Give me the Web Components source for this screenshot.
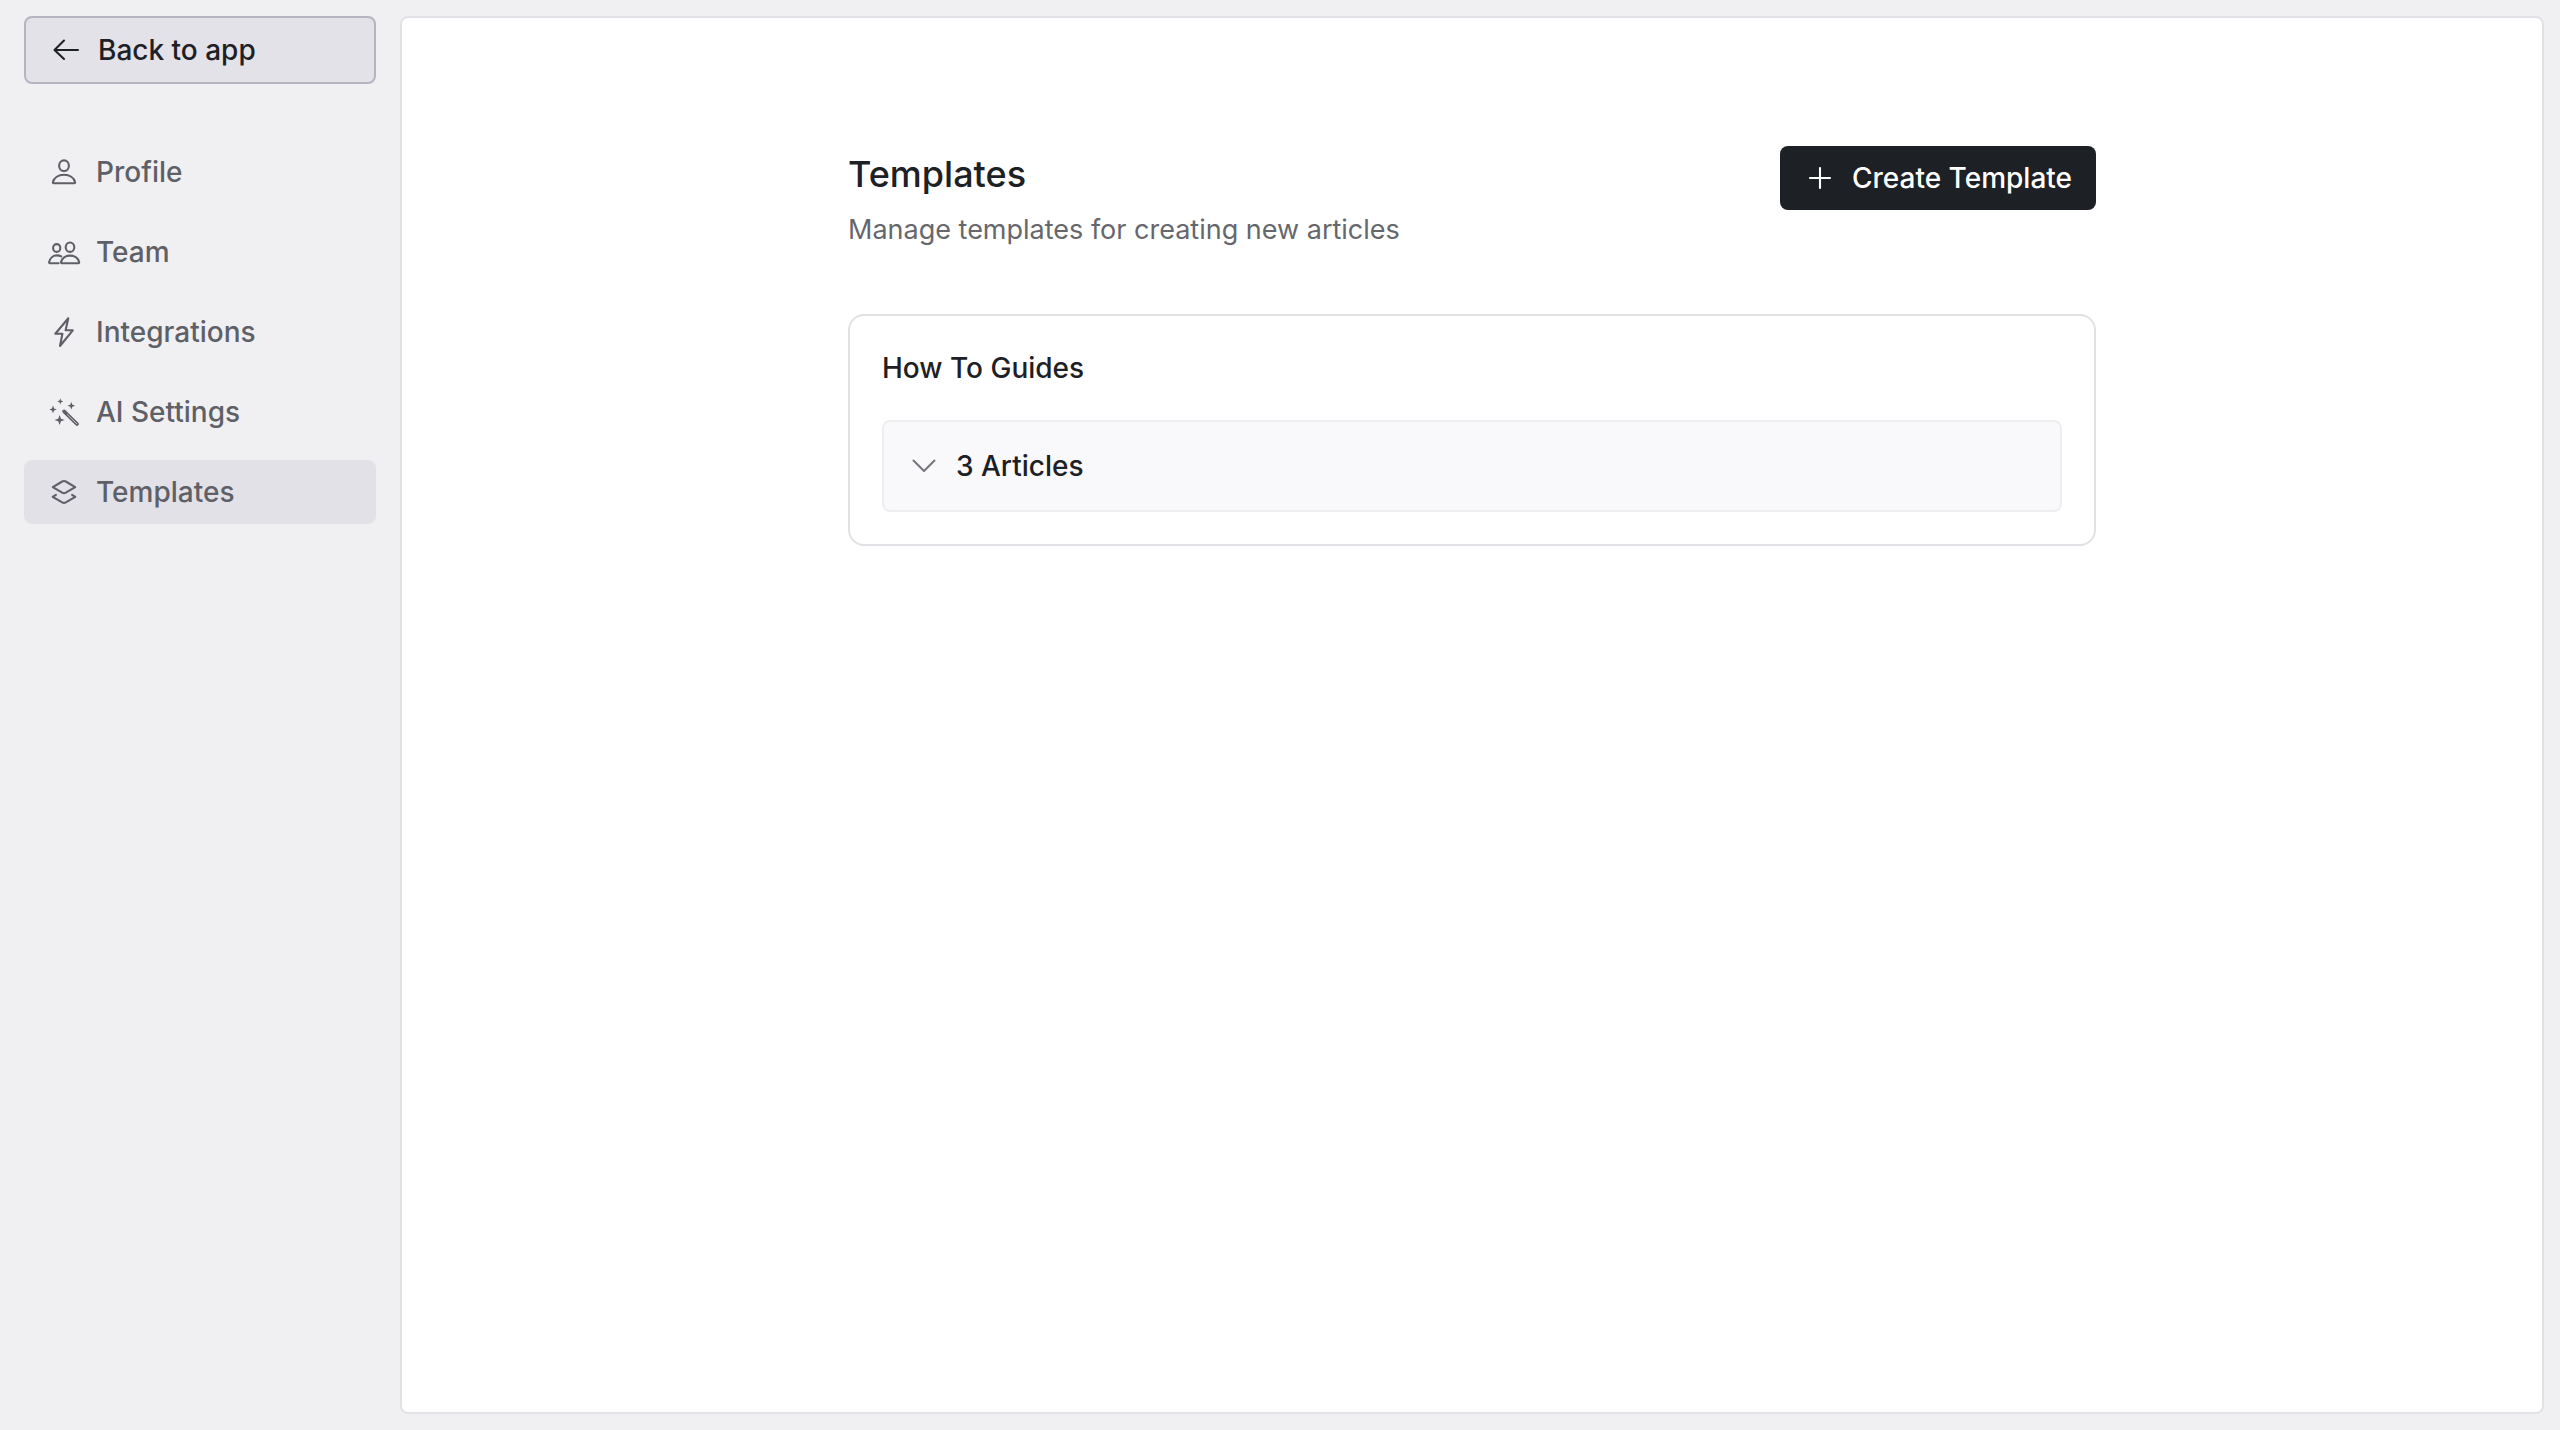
<!DOCTYPE html>
<html lang="en">
<head>
<meta charset="utf-8">
<meta name="viewport" content="width=device-width, initial-scale=1">
<title>Templates</title>
<style>
html {
  font: 500 28px/40px Inter, "Liberation Sans", sans-serif;
  color: #1d2024;
  background: #f0f0f2;
  -webkit-font-smoothing: antialiased;
}
body {
  margin: 0;
}
</style>
</head>
<body>
<settings-layout>
  <back-link slot="sidebar" href="#app">Back to app</back-link>
  <settings-nav slot="sidebar">
    <nav-item icon="profile" href="#profile">Profile</nav-item>
    <nav-item icon="team" href="#team">Team</nav-item>
    <nav-item icon="bolt" href="#integrations">Integrations</nav-item>
    <nav-item icon="wand" href="#ai">AI Settings</nav-item>
    <nav-item icon="layers" href="#templates" active>Templates</nav-item>
  </settings-nav>
  <page-header>
    <span slot="title">Templates</span>
    <span slot="description">Manage templates for creating new articles</span>
    <primary-button slot="action">Create Template</primary-button>
  </page-header>
  <template-card>
    <span slot="title">How To Guides</span>
    <article-toggle>3 Articles</article-toggle>
  </template-card>
</settings-layout>

<script>
// All icons share a 32x32 grid
const icons = {
  back: '<path d="M28 16H5M14 6.5L4.5 16L14 25"/>',
  plus: '<path d="M16 6v20M6 16h20"/>',
  chevron: '<path d="M5.5 10.5L16 21L26.5 10.5"/>',
  profile: `
    <ellipse cx="16" cy="9.7" rx="4.9" ry="5.3"/>
    <path d="M5.7 27.2h20.6c.6 0 1-.5.8-1.1C26 21.8 21.6 18.8 16 18.8S6 21.8 4.9 26.1c-.2.6.2 1.1.8 1.1z"/>`,
  team: `
    <ellipse cx="8.7" cy="12" rx="3.6" ry="3.9"/>
    <ellipse cx="22" cy="11.2" rx="4.3" ry="4.7"/>
    <path d="M13.8 27.2h16.6c.6 0 .9-.4.8-1C30.3 22.3 26.7 19.6 22.1 19.6S13.9 22.3 13 26.2c-.1.6.2 1 .8 1z"/>
    <path d="M10.6 27.2H1.9c-.6 0-.9-.5-.8-1C1.8 22.5 4.700 19.4 8.9 19.4c1.600 0 3 .3 4.300 1"/>`,
  bolt: '<path d="M20.3 2.3L7.3 17.7H14.4L12 30L24.8 14.3H17.6Z"/>',
  wand: `
    <g fill="currentColor" stroke="none">
      <path d="M12.3 2.3l.8 2.3 2.2.8-2.2.8-.8 2.3-.8-2.3-2.2-.8 2.2-.8z"/>
      <path d="M23.3 5.9l1.1 2.8 2.8 1-2.8 1-1.1 2.900-1.1-2.9-2.8-1 2.8-1z"/>
      <path d="M5 9.6l1.1 2.8 2.7 1-2.7 1-1.1 2.8-1.1-2.8-2.7-1 2.7-1z"/>
      <path d="M11.6 19l1.4 3.7 3.7 1.3-3.7 1.3-1.4 3.8-1.4-3.8L6.5 24l3.7-1.3z"/>
    </g>
    <path d="M16.2 15.5L29 28" stroke-width="3.8"/>
    <path class="shine" d="M19.5 18.7L28.8 27.8"/>`,
  layers: `
    <path d="M4.8 11.1L14.2 5.5Q16 4.5 17.8 5.5L27.2 11.1L17.8 16.7Q16 17.7 14.2 16.7Z"/>
    <path d="M7.9 18.8L4.7 20.8L14.2 26.4Q16 27.4 17.8 26.4L27.3 20.8L24.1 18.8"/>`
};

function define(name, html, init) {
  const template = document.createElement('template');
  template.innerHTML = html;
  customElements.define(name, class extends HTMLElement {
    connectedCallback() {
      if (this.shadowRoot) return;
      this.attachShadow({ mode: 'open' });
      this.shadowRoot.appendChild(template.content.cloneNode(true));
      if (init) init(this, this.shadowRoot);
    }
  });
}

define('ui-icon', `
<style>
:host {
  display: block;
  flex: none;
  width: 32px;
  height: 32px;
}
svg {
  display: block;
  width: 100%;
  height: 100%;
  overflow: visible;
  fill: none;
  stroke: currentColor;
  stroke-width: 2.1;
  stroke-linecap: round;
  stroke-linejoin: round;
}
.shine {
  stroke: #c4c4ca;
  stroke-width: 1;
}
</style>
<svg viewBox="0 0 32 32" aria-hidden="true"></svg>
`, (el, root) => {
  root.querySelector('svg').innerHTML = icons[el.getAttribute('name')] || '';
});

define('settings-layout', `
<style>
:host {
  display: grid;
  grid-template-columns: 400px minmax(0, 1fr);
  min-height: 100vh;
  box-sizing: border-box;
  padding: 16px 16px 16px 0;
}
aside {
  display: flex;
  flex-direction: column;
  gap: 56px;
  padding: 0 24px;
}
main {
  padding: 128px 32px;
  border: 2px solid #e1e1e6;
  border-radius: 8px;
  background: #fff;
}
.content {
  display: flex;
  flex-direction: column;
  gap: 64px;
  max-width: 1248px;
  margin: 0 auto;
}
</style>
<aside><slot name="sidebar"></slot></aside>
<main><div class="content"><slot></slot></div></main>
`);

define('back-link', `
<style>
:host {
  display: block;
}
a {
  display: flex;
  align-items: center;
  gap: 16px;
  padding: 12px 24px;
  border: 2px solid #b5b4c1;
  border-radius: 8px;
  background: #e3e2e8;
  color: inherit;
  text-decoration: none;
}
</style>
<a><ui-icon name="back"></ui-icon><slot></slot></a>
`, (el, root) => {
  root.querySelector('a').href = el.getAttribute('href');
});

define('settings-nav', `
<style>
:host {
  display: block;
}
nav {
  display: flex;
  flex-direction: column;
  gap: 16px;
}
</style>
<nav aria-label="Settings"><slot></slot></nav>
`);

define('nav-item', `
<style>
:host {
  display: block;
}
a {
  display: flex;
  align-items: center;
  gap: 16px;
  padding: 12px 24px;
  border-radius: 8px;
  color: #5f6067;
  text-decoration: none;
}
a:hover,
:host([active]) a {
  background: #e2e1e7;
}
</style>
<a><slot></slot></a>
`, (el, root) => {
  const link = root.querySelector('a');
  link.href = el.getAttribute('href');
  if (el.hasAttribute('active')) link.setAttribute('aria-current', 'page');
  const icon = document.createElement('ui-icon');
  icon.setAttribute('name', el.getAttribute('icon'));
  link.prepend(icon);
});

define('page-header', `
<style>
:host {
  display: block;
}
header {
  display: flex;
  justify-content: space-between;
  align-items: flex-start;
  gap: 32px;
}
h1 {
  margin: 0 0 8px;
  font-size: 36px;
  font-weight: 500;
  line-height: 56px;
}
p {
  margin: 0;
  font-size: 27px;
  font-weight: 400;
  color: #66676d;
}
</style>
<header>
  <div>
    <h1><slot name="title"></slot></h1>
    <p><slot name="description"></slot></p>
  </div>
  <slot name="action"></slot>
</header>
`);

define('primary-button', `
<style>
:host {
  display: block;
  flex: none;
}
button {
  display: flex;
  align-items: center;
  gap: 16px;
  padding: 12px 24px;
  border: 0;
  border-radius: 8px;
  background: #1d2024;
  color: #fff;
  font: inherit;
  cursor: pointer;
}
</style>
<button type="button"><ui-icon name="plus"></ui-icon><slot></slot></button>
`);

define('template-card', `
<style>
:host {
  display: block;
}
section {
  padding: 32px;
  border: 2px solid #e1e1e6;
  border-radius: 16px;
}
h2 {
  margin: 0 0 32px;
  font: inherit;
}
</style>
<section>
  <h2><slot name="title"></slot></h2>
  <slot></slot>
</section>
`);

define('article-toggle', `
<style>
:host {
  display: block;
}
button {
  display: flex;
  align-items: center;
  gap: 16px;
  width: 100%;
  padding: 24px;
  border: 2px solid #eeeef0;
  border-radius: 8px;
  background: #f9f9fb;
  color: inherit;
  font: inherit;
  cursor: pointer;
}
ui-icon {
  color: #77787e;
}
</style>
<button type="button" aria-expanded="false"><ui-icon name="chevron"></ui-icon><slot></slot></button>
`, (el, root) => {
  const button = root.querySelector('button');
  button.addEventListener('click', () => {
    button.setAttribute('aria-expanded', button.getAttribute('aria-expanded') !== 'true');
  });
});
</script>
</body>
</html>
